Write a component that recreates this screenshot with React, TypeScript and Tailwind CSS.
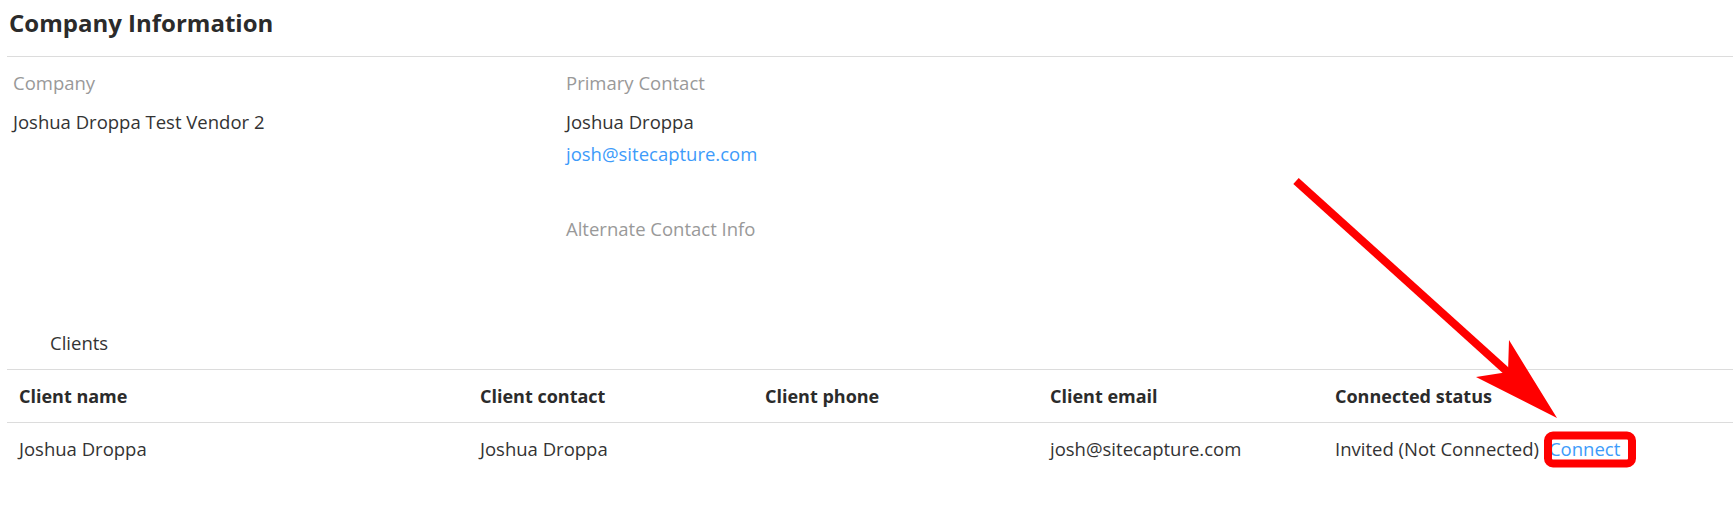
import React from 'react';

type ClientRow = {
  name: string;
  contact: string;
  phone: string;
  email: string;
  status: string;
};

const clients: ClientRow[] = [
  {
    name: 'Joshua Droppa',
    contact: 'Joshua Droppa',
    phone: '',
    email: 'josh@sitecapture.com',
    status: 'Invited (Not Connected)',
  },
];

const gridCols = 'grid grid-cols-[461px_285px_285px_285px_1fr]';

function Callout() {
  // red pointer arrow + outline around the Connect action
  return (
    <svg
      className="absolute inset-0 pointer-events-none"
      width="1733"
      height="529"
      viewBox="0 0 1733 529"
    >
      <line x1="1296" y1="181" x2="1512" y2="376" stroke="#ff0000" strokeWidth="8" />
      <polygon points="1509,340 1557,418 1476,377 1508,372" fill="#ff0000" />
      <rect x="1548" y="435.5" width="84" height="28" rx="5" fill="none" stroke="#ff0000" strokeWidth="8" />
    </svg>
  );
}

export default function App() {
  return (
    <div className="relative w-full h-[529px] bg-white text-[#333] font-['Open_Sans',sans-serif] overflow-hidden">
      <div className="ml-[7px]">
        <div className="h-[57px] border-b border-[#dcdcdc]">
          <h2 className="pl-[2px] leading-[46px] text-[24px] font-bold text-[#2b2b2b]">Company Information</h2>
        </div>

        {/* company / contact details */}
        <div className="grid grid-cols-[553px_1fr] pl-[6px] text-[18.5px] leading-[32px]">
          <div>
            <div className="mt-[10px] text-[#999]">Company</div>
            <div className="mt-[7px]">Joshua Droppa Test Vendor 2</div>
          </div>
          <div>
            <div className="mt-[10px] text-[#999]">Primary Contact</div>
            <div className="mt-[7px]">Joshua Droppa</div>
            <a href="#" className="block text-[#3d9bfa]">josh@sitecapture.com</a>
            <div className="mt-[43px] text-[#999]">Alternate Contact Info</div>
          </div>
        </div>

        <div className="mt-[82px] pl-[43px] h-[42px] text-[18.5px] leading-[32px]">Clients</div>

        {/* clients table */}
        <div className="border-t border-[#dcdcdc] text-[18.5px]">
          <div className={`${gridCols} h-[53px] items-center border-b border-[#dcdcdc] text-[18px] font-bold text-[#2b2b2b]`}>
            <div className="pl-[12px]">Client name</div>
            <div className="pl-[12px]">Client contact</div>
            <div className="pl-[12px]">Client phone</div>
            <div className="pl-[12px]">Client email</div>
            <div className="pl-[12px]">Connected status</div>
          </div>
          {clients.map((c) => (
            <div key={c.email} className={`${gridCols} h-[52px] items-center`}>
              <div className="pl-[12px]">{c.name}</div>
              <div className="pl-[12px]">{c.contact}</div>
              <div className="pl-[12px]">{c.phone}</div>
              <div className="pl-[12px]">{c.email}</div>
              <div className="pl-[12px] whitespace-nowrap">
                {c.status}
                <a href="#" className="ml-[10px] text-[#3d9bfa]">Connect</a>
              </div>
            </div>
          ))}
        </div>
      </div>
      <Callout />
    </div>
  );
}
